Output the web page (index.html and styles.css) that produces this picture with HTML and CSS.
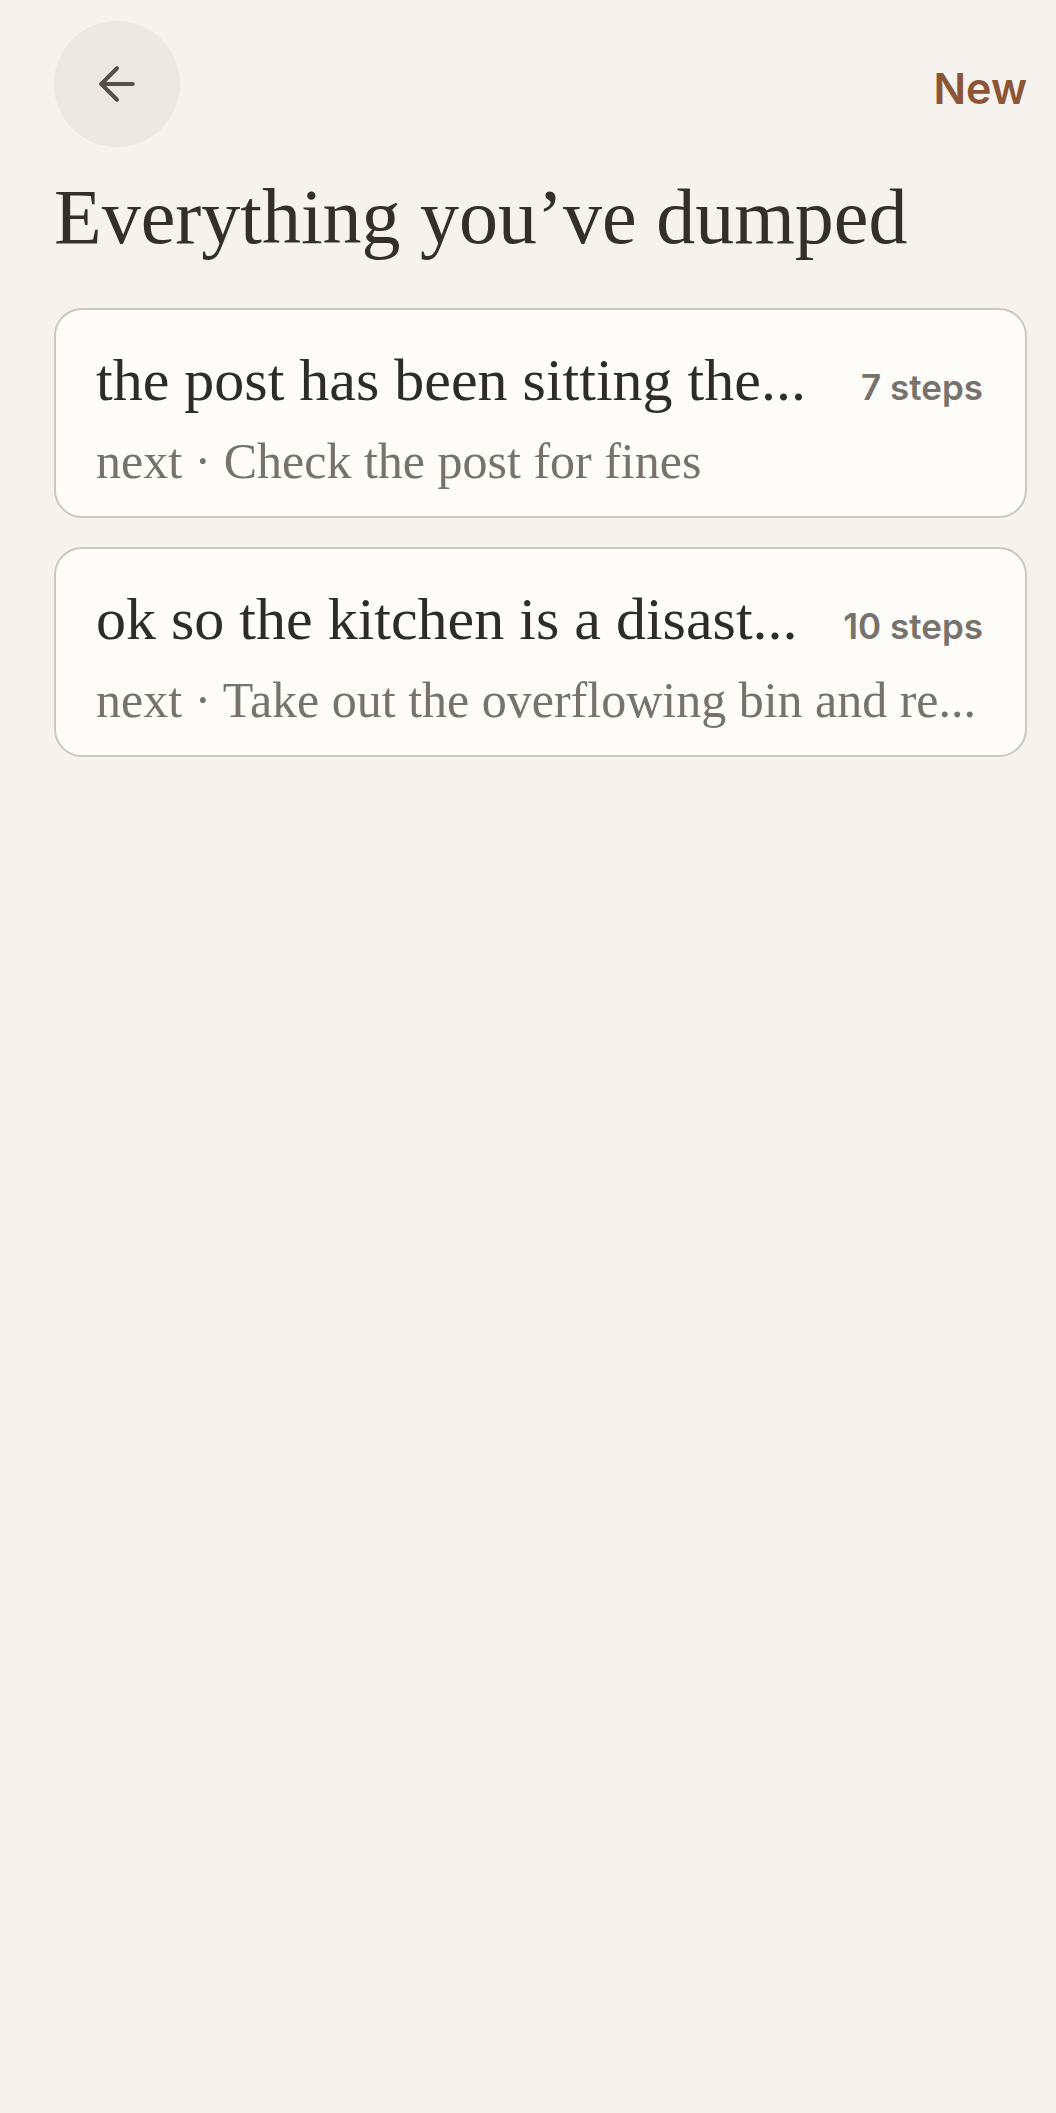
FILE: index.html
```html
<!DOCTYPE html>
<html lang="en">
<head>
    <meta charset="UTF-8">
    <meta name="viewport" content="width=device-width, initial-scale=1.0">
    <title>Everything you've dumped</title>
    <link rel="stylesheet" href="styles.css">
</head>
<body>
    <div class="page">
        <header class="topbar">
            <button class="back-btn" aria-label="Back">
                <svg width="54" height="54" viewBox="0 0 24 24" fill="none" stroke="currentColor" stroke-width="1.8" stroke-linecap="round" stroke-linejoin="round">
                    <path d="M19 12H5"/>
                    <path d="M12 19l-7-7 7-7"/>
                </svg>
            </button>
            <button class="new-btn">New</button>
        </header>

        <h1 class="page-title">Everything you’ve dumped</h1>

        <ul class="dump-list">
            <li class="dump-card">
                <div class="dump-row">
                    <span class="dump-title">the post has been sitting the...</span>
                    <span class="dump-steps">7 steps</span>
                </div>
                <div class="dump-next">next · Check the post for fines</div>
            </li>
            <li class="dump-card">
                <div class="dump-row">
                    <span class="dump-title">ok so the kitchen is a disast...</span>
                    <span class="dump-steps">10 steps</span>
                </div>
                <div class="dump-next">next · Take out the overflowing bin and re...</div>
            </li>
        </ul>
    </div>
</body>
</html>
```

FILE: styles.css
```css
body {
    margin: 0;
    min-height: 100vh;
    background-color: #f6f2ed;
    font-family: "Liberation Serif", "Times New Roman", serif;
    color: #33302b;
}

.page {
    padding: 21px 29px 0 54px;
}

.topbar {
    display: flex;
    justify-content: space-between;
    align-items: center;
}

.back-btn {
    width: 126px;
    height: 126px;
    border-radius: 50%;
    border: none;
    padding: 0;
    background-color: #ece8e2;
    color: #55504a;
    display: flex;
    align-items: center;
    justify-content: center;
    cursor: pointer;
}

.new-btn {
    border: none;
    background: none;
    padding: 7px 0 0 0;
    font-family: Inter, "Noto Sans", sans-serif;
    font-weight: 600;
    font-size: 43px;
    color: #8b5536;
    cursor: pointer;
}

.page-title {
    margin: 23px 0 0 0;
    font-weight: 400;
    font-size: 78px;
    line-height: 1.2;
    color: #33302b;
}

.dump-list {
    list-style: none;
    margin: 44px 0 0 0;
    padding: 0;
    display: flex;
    flex-direction: column;
    gap: 29px;
}

.dump-card {
    height: 210px;
    box-sizing: border-box;
    background-color: #fdfcf9;
    border: 2px solid #cdc7bf;
    border-radius: 28px;
    padding: 33px 42px 0 40px;
}

.dump-row {
    display: flex;
    justify-content: space-between;
    align-items: baseline;
    gap: 24px;
}

.dump-title {
    white-space: nowrap;
    font-size: 60px;
    line-height: 1.25;
    color: #2f2c28;
}

.dump-steps {
    flex-shrink: 0;
    font-family: Inter, "Noto Sans", sans-serif;
    font-weight: 600;
    font-size: 35px;
    color: #77726b;
}

.dump-next {
    margin-top: 11px;
    white-space: nowrap;
    font-size: 50px;
    line-height: 1.3;
    color: #77726b;
}
```
